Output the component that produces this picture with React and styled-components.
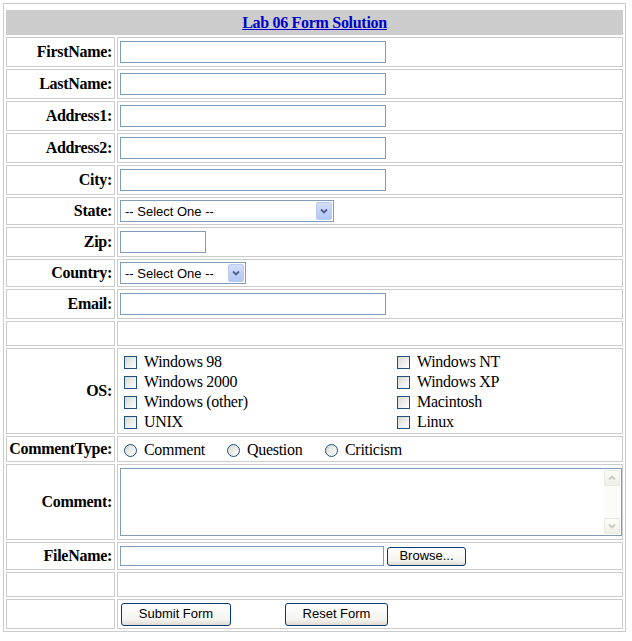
import styled, { createGlobalStyle } from "styled-components";

const GlobalStyle = createGlobalStyle`
  html, body {
    margin: 0;
    padding: 0;
    background: #fff;
  }
  body {
    font-family: "Liberation Serif", "Times New Roman", serif;
    font-size: 16px;
    letter-spacing: -0.3px;
    color: #000;
  }
`;

const textFields = [
    { label: "FirstName:", w: 266 },
    { label: "LastName:", w: 266 },
    { label: "Address1:", w: 266 },
    { label: "Address2:", w: 266 },
    { label: "City:", w: 266 },
];

const osList = [
    "Windows 98",
    "Windows 2000",
    "Windows (other)",
    "UNIX",
    "Windows NT",
    "Windows XP",
    "Macintosh",
    "Linux",
];

const commentTypes = [
    { label: "Comment", w: 103 },
    { label: "Question", w: 98 },
    { label: "Criticism" },
];

const ChevronDown = ({ color = "#4d6185" }) => (
    <svg width="8" height="6" viewBox="0 0 8 6">
        <path d="M1 1.5 L4 4.5 L7 1.5" fill="none" stroke={color} strokeWidth="1.8" />
    </svg>
);

const ChevronUp = ({ color = "#c9c9c1" }) => (
    <svg width="8" height="6" viewBox="0 0 8 6">
        <path d="M1 4.5 L4 1.5 L7 4.5" fill="none" stroke={color} strokeWidth="1.8" />
    </svg>
);

const SelectOne = ({ w }) => (
    <Select $w={w}>
        <SelectText>-- Select One --</SelectText>
        <SelectArrow>
            <ChevronDown />
        </SelectArrow>
    </Select>
);

const App = () => {
    return (
        <>
            <GlobalStyle />
            <Frame>
                <Header>
                    <Title href="#">Lab 06 Form Solution</Title>
                </Header>

                {textFields.map((f) => (
                    <Row key={f.label} label={f.label}>
                        <TextInput $w={f.w} />
                    </Row>
                ))}

                <Row label="State:">
                    <SelectOne w={214} />
                </Row>
                <Row label="Zip:">
                    <TextInput $w={86} />
                </Row>
                <Row label="Country:">
                    <SelectOne w={126} />
                </Row>
                <Row label="Email:">
                    <TextInput $w={266} />
                </Row>

                <Row label="">
                    <Blank />
                </Row>

                <Row label="OS:">
                    <OsGrid>
                        {osList.map((os) => (
                            <Option key={os}>
                                <Box />
                                {os}
                            </Option>
                        ))}
                    </OsGrid>
                </Row>

                <Row label="CommentType:">
                    {commentTypes.map((c) => (
                        <Option key={c.label} $w={c.w}>
                            <Box $round />
                            {c.label}
                        </Option>
                    ))}
                </Row>

                <Row label="Comment:">
                    <TextArea>
                        <Scrollbar>
                            <ScrollButton>
                                <ChevronUp />
                            </ScrollButton>
                            <ScrollButton>
                                <ChevronDown color="#c9c9c1" />
                            </ScrollButton>
                        </Scrollbar>
                    </TextArea>
                </Row>

                <Row label="FileName:">
                    <TextInput $w={264} $h={20} />
                    <Button $w={79} $h={19} $ml={3}>
                        Browse...
                    </Button>
                </Row>

                <Row label="">
                    <Blank />
                </Row>

                <Row label="" top>
                    <Buttons>
                        <Button $w={110} $h={23}>
                            Submit Form
                        </Button>
                        <Button $w={103} $h={23}>
                            Reset Form
                        </Button>
                    </Buttons>
                </Row>
            </Frame>
        </>
    );
};

const Row = ({ label, top, children }) => (
    <>
        <Label>{label}</Label>
        <Field $top={top}>{children}</Field>
    </>
);

export default App;

const Frame = styled.div`
    margin: 3px;
    width: 623px;
    box-sizing: border-box;
    border: 1px solid #cbcbcb;
    padding: 6px 2px 2px;

    display: grid;
    grid-template-columns: 109px 506px;
    gap: 2px;
`;

const Cell = styled.div`
    border: 1px solid #cccccc;
    padding: 2px;
    display: flex;
    align-items: center;
    min-width: 0;
`;

const Header = styled(Cell)`
    grid-column: 1 / -1;
    justify-content: center;
    background: #cccccc;
    line-height: 19px;
`;

const Title = styled.a`
    font-weight: bold;
    color: #0000cc;
    text-decoration: underline;
`;

const Label = styled(Cell)`
    justify-content: flex-end;
    font-weight: bold;
    line-height: 18px;
    white-space: nowrap;
`;

const Field = styled(Cell)`
    align-items: ${(p) => (p.$top ? "flex-start" : "center")};
`;

const TextInput = styled.input.attrs({ type: "text" })`
    box-sizing: border-box;
    width: ${(p) => p.$w}px;
    height: ${(p) => p.$h || 22}px;
    margin: 1px 0;
    padding: 1px 2px;
    border: 1px solid #7f9db9;
    background: #fff;
    font: 13px "Liberation Sans", Arial, sans-serif;
    outline: none;
`;

const Select = styled.div`
    box-sizing: border-box;
    width: ${(p) => p.$w}px;
    height: 22px;
    padding: 1px;
    border: 1px solid #7f9db9;
    background: #fff;
    display: flex;
    align-items: center;
    font: 13px "Liberation Sans", Arial, sans-serif;
    letter-spacing: normal;
`;

const SelectText = styled.span`
    flex: 1;
    padding-left: 3px;
    white-space: nowrap;
`;

const SelectArrow = styled.span`
    box-sizing: border-box;
    width: 16px;
    height: 18px;
    border: 1px solid #b9cbf1;
    border-radius: 2px;
    background: linear-gradient(#d3dffd, #b2c7f5);
    display: flex;
    align-items: center;
    justify-content: center;
`;

const Blank = styled.div`
    height: 19px;
`;

const OsGrid = styled.div`
    display: grid;
    grid-template-columns: 273px 1fr;
    grid-template-rows: repeat(4, 20px);
    grid-auto-flow: column;
    width: 100%;
`;

const Option = styled.label`
    box-sizing: border-box;
    display: flex;
    align-items: center;
    height: 20px;
    padding-top: 2px;
    line-height: 18px;
    white-space: nowrap;
    width: ${(p) => (p.$w ? `${p.$w}px` : "auto")};
    flex: none;
`;

const Box = styled.span`
    flex: none;
    box-sizing: border-box;
    width: 13px;
    height: 13px;
    margin: 1px 7px 0 4px;
    border: 1px solid #1c5180;
    border-radius: ${(p) => (p.$round ? "50%" : "0")};
    background: linear-gradient(135deg, #d8d8d2, #ffffff);
`;

const TextArea = styled.div`
    box-sizing: border-box;
    width: 502px;
    height: 68px;
    margin: 1px 0;
    padding: 1px;
    border: 1px solid #7f9db9;
    background: #fff;
    display: flex;
    justify-content: flex-end;
    flex: none;
`;

const Scrollbar = styled.div`
    width: 16px;
    background: #fbfbf7;
    display: flex;
    flex-direction: column;
    justify-content: space-between;
`;

const ScrollButton = styled.div`
    box-sizing: border-box;
    height: 16px;
    border: 1px solid #e9e9e2;
    border-radius: 2px;
    background: linear-gradient(#fbfbf8, #f0f0ea);
    display: flex;
    align-items: center;
    justify-content: center;
`;

const Buttons = styled.div`
    display: flex;
    gap: 54px;
    margin: 1px 0 0 1px;
`;

const Button = styled.button`
    box-sizing: border-box;
    width: ${(p) => p.$w}px;
    height: ${(p) => p.$h}px;
    margin-left: ${(p) => p.$ml || 0}px;
    padding: 0 0 2px;
    border: 1px solid #003c74;
    border-radius: 3px;
    background: linear-gradient(#ffffff, #f3f3ef 75%, #dedbd0);
    color: #000;
    font: 13px "Liberation Sans", Arial, sans-serif;
    letter-spacing: normal;
    line-height: 1;
    flex: none;
`;
